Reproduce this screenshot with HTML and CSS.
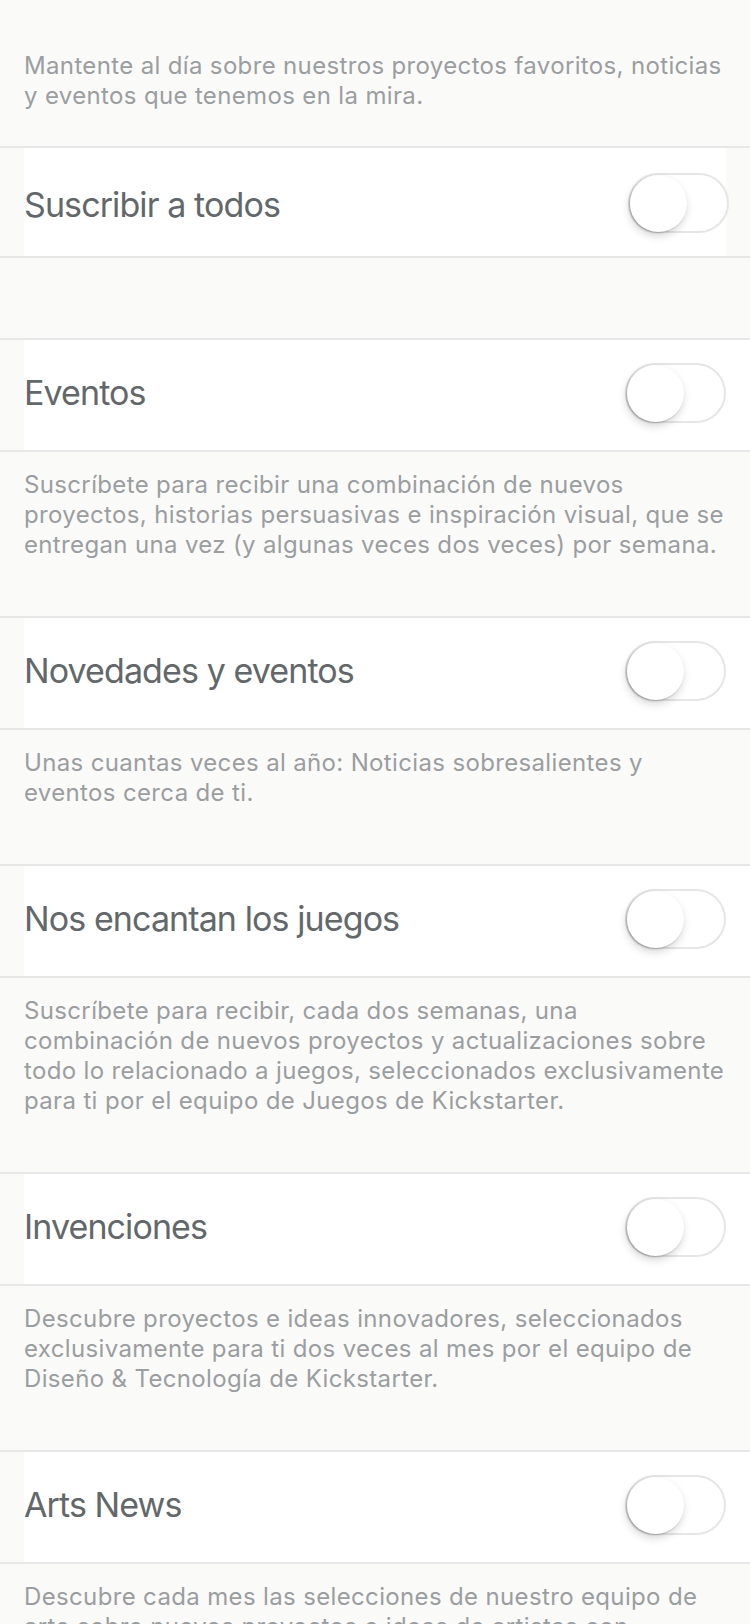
FILE: index.html
```html
<!DOCTYPE html>
<html lang="es">
<head>
<meta charset="utf-8">
<title>Boletines</title>
<link rel="stylesheet" href="styles.css">
</head>
<body>
<main class="page">
  <section class="intro">
    <p class="text">Mantente al día sobre nuestros proyectos favoritos, noticias<br>y eventos que tenemos en la mira.</p>
  </section>

  <div class="row row-all">
    <div class="cell">
      <span class="title">Suscribir a todos</span>
      <span class="switch"><span class="knob"></span></span>
    </div>
  </div>

  <div class="spacer"></div>

  <div class="row">
    <div class="cell">
      <span class="title">Eventos</span>
      <span class="switch"><span class="knob"></span></span>
    </div>
  </div>
  <p class="desc">Suscríbete para recibir una combinación de nuevos<br>proyectos, historias persuasivas e inspiración visual, que se<br>entregan una vez (y algunas veces dos veces) por semana.</p>

  <div class="row">
    <div class="cell">
      <span class="title">Novedades y eventos</span>
      <span class="switch"><span class="knob"></span></span>
    </div>
  </div>
  <p class="desc">Unas cuantas veces al año: Noticias sobresalientes y<br>eventos cerca de ti.</p>

  <div class="row">
    <div class="cell">
      <span class="title">Nos encantan los juegos</span>
      <span class="switch"><span class="knob"></span></span>
    </div>
  </div>
  <p class="desc">Suscríbete para recibir, cada dos semanas, una<br>combinación de nuevos proyectos y actualizaciones sobre<br>todo lo relacionado a juegos, seleccionados exclusivamente<br>para ti por el equipo de Juegos de Kickstarter.</p>

  <div class="row">
    <div class="cell">
      <span class="title">Invenciones</span>
      <span class="switch"><span class="knob"></span></span>
    </div>
  </div>
  <p class="desc">Descubre proyectos e ideas innovadores, seleccionados<br>exclusivamente para ti dos veces al mes por el equipo de<br>Diseño &amp; Tecnología de Kickstarter.</p>

  <div class="row">
    <div class="cell">
      <span class="title">Arts News</span>
      <span class="switch"><span class="knob"></span></span>
    </div>
  </div>
  <p class="desc">Descubre cada mes las selecciones de nuestro equipo de<br>arte sobre nuevos proyectos e ideas de artistas con<br>talento de todo el mundo.</p>
</main>
</body>
</html>
```

FILE: styles.css
```css
html, body {
  margin: 0;
  padding: 0;
}

body {
  background: #fafaf9;
  font-family: "Inter", "Noto Sans", "Liberation Sans", sans-serif;
  height: 1624px;
  overflow: hidden;
}

.page {
  display: flex;
  flex-direction: column;
}

.intro {
  padding: 51px 0 35px 24px;
}

.text,
.desc {
  margin: 0;
  font-size: 24px;
  line-height: 30px;
  letter-spacing: 0.35px;
  color: #9a9ea0;
  white-space: nowrap;
}

.desc {
  padding: 18px 0 56px 24px;
}

.row {
  border-top: 2px solid #e7e7e7;
  border-bottom: 2px solid #e7e7e7;
  padding-left: 24px;
  background: #fafaf9;
}

.cell {
  height: 110px;
  background: #ffffff;
  display: flex;
  align-items: center;
  justify-content: space-between;
  padding-right: 24px;
}

.title {
  font-size: 34px;
  line-height: 40px;
  letter-spacing: -0.9px;
  color: #62686a;
  margin-bottom: 4px;
}

.row-all .cell {
  height: 108px;
  margin-right: 24px;
  padding-right: 0;
}

.row-all .title {
  margin-bottom: 0;
  margin-top: 5px;
}

.row-all .switch {
  margin-right: -3px;
  margin-top: 2px;
  margin-bottom: 0;
}

.spacer {
  height: 80px;
}

.switch {
  position: relative;
  box-sizing: border-box;
  width: 101px;
  height: 60px;
  border: 2.5px solid #e6e6e6;
  border-radius: 30px;
  background: #ffffff;
  margin-bottom: 4px;
  flex: none;
}

.knob {
  position: absolute;
  top: -0.5px;
  left: -0.5px;
  width: 57px;
  height: 57px;
  border-radius: 50%;
  background: #ffffff;
  box-shadow: -1px 4px 9px rgba(0, 0, 0, 0.16), -1px 1px 2px rgba(0, 0, 0, 0.22);
}
```
